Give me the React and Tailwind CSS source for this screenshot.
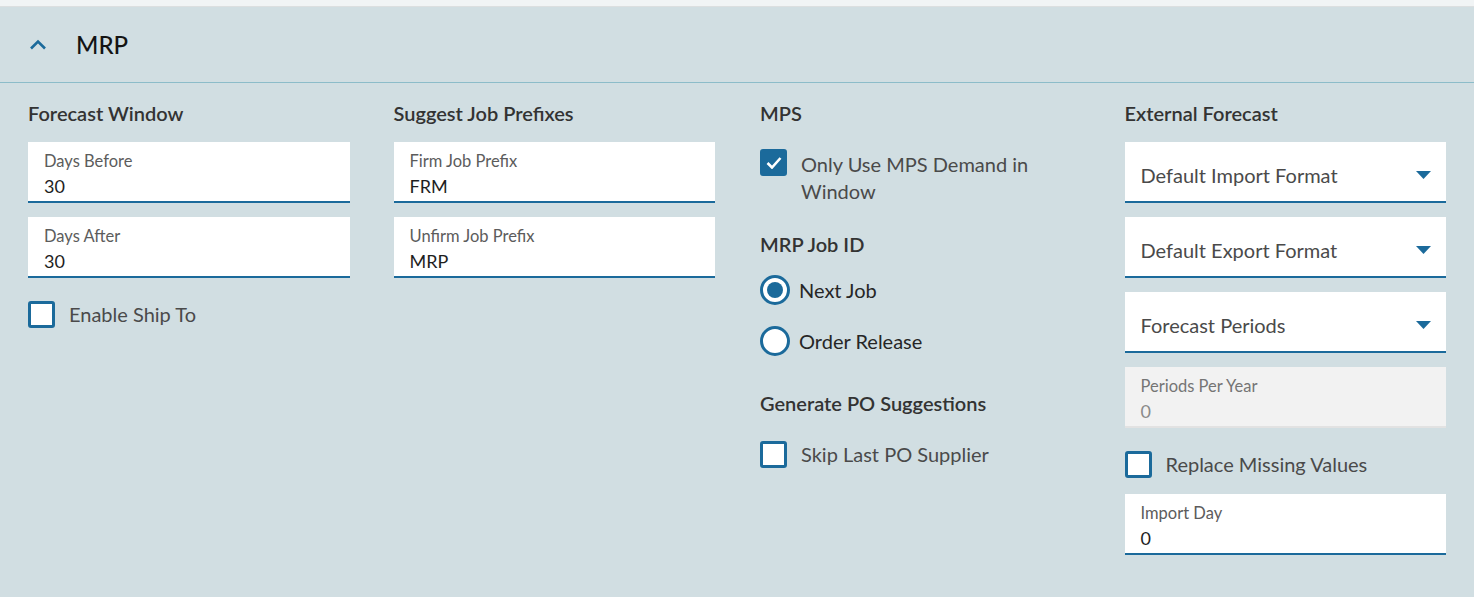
const BLUE = 'border-[#1b6a9b]'

function Field({ label, value, disabled }) {
  return (
    <div
      className={`h-[61px] px-[16px] pt-[9px] border-b-2 ${
        disabled ? 'bg-[#f2f2f2] border-[#e2e2e2]' : `bg-white ${BLUE}`
      }`}
    >
      <div className={`text-[16.5px] leading-[20px] ${disabled ? 'text-[#757575]' : 'text-[#5c5c5c]'}`}>{label}</div>
      <div className={`mt-[4px] text-[18px] leading-[22px] ${disabled ? 'text-[#8a8a8a]' : 'text-[#1e1e1e]'}`}>{value}</div>
    </div>
  )
}

function Select({ label }) {
  return (
    <div className={`h-[61px] pl-[16px] pr-[15px] pt-[7px] flex items-center justify-between bg-white border-b-2 ${BLUE}`}>
      <span className="text-[20px] leading-[26px] text-[#4a4a4a]">{label}</span>
      <svg width="15" height="8" viewBox="0 0 15 8">
        <path d="M0 0h15L7.5 8z" fill="#1b6a9b" />
      </svg>
    </div>
  )
}

function Checkbox({ checked, children, className = '', textClass = '' }) {
  return (
    <div className={`flex items-start gap-[14px] ${className}`}>
      <span
        className={`shrink-0 w-[27px] h-[27px] rounded-[3px] border-[3px] ${BLUE} flex items-center justify-center ${
          checked ? 'bg-[#1b6a9b]' : 'bg-white'
        }`}
      >
        {checked && (
          <svg width="16" height="13" viewBox="0 0 16 13">
            <path d="M1.5 7l4.5 4.5L14.5 2" stroke="white" strokeWidth="2.6" fill="none" />
          </svg>
        )}
      </span>
      <span className={`text-[20px] leading-[27px] text-[#4a4a4a] ${textClass}`}>{children}</span>
    </div>
  )
}

function Radio({ checked, children, className = '' }) {
  return (
    <div className={`flex items-center gap-[9px] ${className}`}>
      <span className={`shrink-0 w-[30px] h-[30px] rounded-full border-[3px] ${BLUE} bg-white flex items-center justify-center`}>
        {checked && <span className="w-[16px] h-[16px] rounded-full bg-[#1b6a9b]" />}
      </span>
      <span className="text-[20px] leading-[27px] text-[#262626]">{children}</span>
    </div>
  )
}

function Heading({ children, className = '' }) {
  return <div className={`text-[20px] leading-[24px] font-semibold text-[#333333] ${className}`}>{children}</div>
}

export default function App() {
  return (
    <div className="w-[1474px] h-[597px] bg-[#d1dee2] font-['Lato','Liberation_Sans',sans-serif] overflow-hidden">
      <div className="h-[7px] bg-[#f1f4f5] border-b border-[#dcdfe0]" />
      <div className="h-[76px] flex items-center border-b border-[#8cbcc9]">
        <svg className="ml-[29px]" width="18" height="11" viewBox="0 0 18 11">
          <path d="M2 9.5l7-7 7 7" stroke="#1b6a9b" strokeWidth="2.6" fill="none" />
        </svg>
        <span className="ml-[29px] text-[24px] font-medium text-[#141414]">MRP</span>
      </div>

      <div className="grid grid-cols-4 gap-x-[44px] px-[28px] pt-[18px]">
        <div className="flex flex-col">
          <Heading>Forecast Window</Heading>
          <div className="mt-[17px] flex flex-col gap-[14px]">
            <Field label="Days Before" value="30" />
            <Field label="Days After" value="30" />
          </div>
          <Checkbox className="mt-[23px] items-center">Enable Ship To</Checkbox>
        </div>

        <div className="flex flex-col">
          <Heading>Suggest Job Prefixes</Heading>
          <div className="mt-[17px] flex flex-col gap-[14px]">
            <Field label="Firm Job Prefix" value="FRM" />
            <Field label="Unfirm Job Prefix" value="MRP" />
          </div>
        </div>

        <div className="flex flex-col pl-[1px]">
          <Heading>MPS</Heading>
          <Checkbox checked className="mt-[24px]" textClass="mt-[2px] max-w-[240px]">
            Only Use MPS Demand in Window
          </Checkbox>
          <Heading className="mt-[27px]">MRP Job ID</Heading>
          <Radio checked className="mt-[19px]">Next Job</Radio>
          <Radio className="mt-[21px]">Order Release</Radio>
          <Heading className="mt-[35px]">Generate PO Suggestions</Heading>
          <Checkbox className="mt-[26px] items-center">Skip Last PO Supplier</Checkbox>
        </div>

        <div className="flex flex-col">
          <Heading>External Forecast</Heading>
          <div className="mt-[17px] flex flex-col gap-[14px]">
            <Select label="Default Import Format" />
            <Select label="Default Export Format" />
            <Select label="Forecast Periods" />
            <Field label="Periods Per Year" value="0" disabled />
          </div>
          <Checkbox className="mt-[23px] items-center">Replace Missing Values</Checkbox>
          <div className="mt-[16px]">
            <Field label="Import Day" value="0" />
          </div>
        </div>
      </div>
    </div>
  )
}
